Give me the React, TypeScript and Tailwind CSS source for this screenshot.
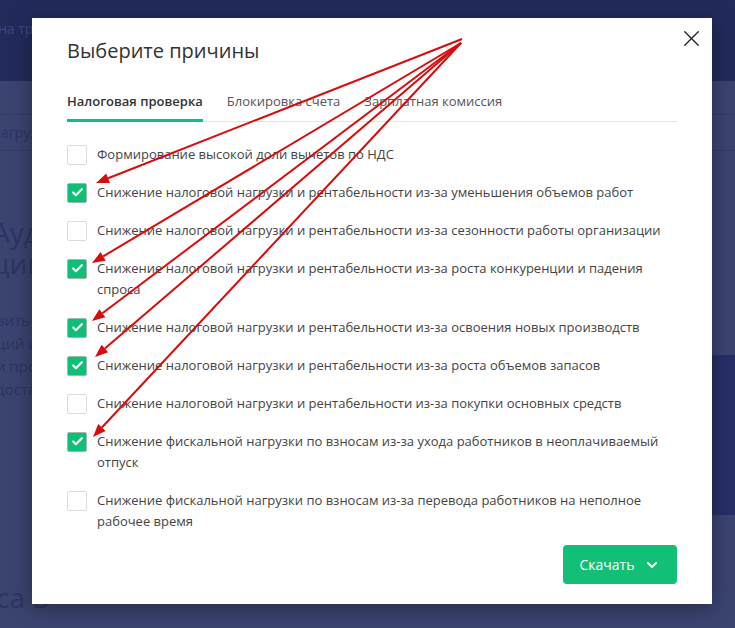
import { X, ChevronDown, Check } from "lucide-react";

const reasons = [
  { text: "Формирование высокой доли вычетов по НДС", checked: false },
  { text: "Снижение налоговой нагрузки и рентабельности из-за уменьшения объемов работ", checked: true },
  { text: "Снижение налоговой нагрузки и рентабельности из-за сезонности работы организации", checked: false },
  { text: "Снижение налоговой нагрузки и рентабельности из-за роста конкуренции и падения спроса", checked: true },
  { text: "Снижение налоговой нагрузки и рентабельности из-за освоения новых производств", checked: true },
  { text: "Снижение налоговой нагрузки и рентабельности из-за роста объемов запасов", checked: true },
  { text: "Снижение налоговой нагрузки и рентабельности из-за покупки основных средств", checked: false },
  { text: "Снижение фискальной нагрузки по взносам из-за ухода работников в неоплачиваемый отпуск", checked: true },
  { text: "Снижение фискальной нагрузки по взносам из-за перевода работников на неполное рабочее время", checked: false },
];

const arrows = [
  { from: [462, 39], to: [96, 183] },
  { from: [461, 43], to: [92, 263] },
  { from: [461, 43], to: [92, 321] },
  { from: [461, 43], to: [95, 357] },
  { from: [461, 43], to: [93, 437] },
];

function Arrows() {
  return (
    <svg className="absolute inset-0 pointer-events-none" width={735} height={628}>
      {arrows.map((a, i) => {
        const [x1, y1] = a.from;
        const [x2, y2] = a.to;
        const len = Math.hypot(x2 - x1, y2 - y1);
        const ux = (x2 - x1) / len;
        const uy = (y2 - y1) / len;
        const bx = x2 - ux * 13;
        const by = y2 - uy * 13;
        const px = -uy * 5;
        const py = ux * 5;
        return (
          <g key={i}>
            <line x1={x1} y1={y1} x2={bx} y2={by} stroke="#d80c0c" strokeWidth={2} />
            <polygon
              points={`${x2},${y2} ${bx + px},${by + py} ${bx - px},${by - py}`}
              fill="#d80c0c"
            />
          </g>
        );
      })}
    </svg>
  );
}

function Checkbox({ checked }: { checked: boolean }) {
  return checked ? (
    <span className="flex h-5 w-5 shrink-0 items-center justify-center rounded-[2px] border border-[#9fb8ad] bg-[#10bf77]">
      <Check size={13} strokeWidth={4} className="text-white" />
    </span>
  ) : (
    <span className="h-5 w-5 shrink-0 rounded-[2px] border border-[#dcdcdc] bg-white" />
  );
}

export default function App() {
  return (
    <div className="relative h-[628px] w-[735px] overflow-hidden bg-[#3b4370] font-['Open_Sans',sans-serif]">
      {/* dimmed page behind */}
      <div className="flex h-[81px] flex-col bg-[#222a5b] pt-[18px] text-[14px] text-[#3c4784]">
        <span className="-ml-[2px]">на тр</span>
      </div>
      <div className="flex flex-col text-[#2c3462]">
        <div className="h-[34px] border-b border-[#343c68]" />
        <div className="-ml-[8px] flex h-[36px] items-center border-b border-[#343c68] text-[14px]">нагруз</div>
        <div className="-ml-[8px] mt-[66px] flex flex-col text-[28px] leading-[31px]">
          <span>Ауди</span>
          <span>ции</span>
        </div>
        <div className="-ml-[4px] mt-[30px] flex flex-col text-[15px] leading-[23px]">
          <span>вить</span>
          <span>ций и</span>
          <span>и про</span>
          <span>доста</span>
        </div>
        <div className="-ml-[4px] mt-[175px] text-[28px]">са в</div>
      </div>
      <div className="absolute right-0 top-[355px] h-[160px] w-[24px] bg-[#262f66]" />

      {/* modal */}
      <div className="absolute left-[32px] top-[18px] flex h-[586px] w-[680px] flex-col bg-white px-[35px] pt-[19px] shadow-[0_4px_20px_rgba(0,0,0,0.35)]">
        <button className="absolute right-[7px] top-[7px] text-[#222]">
          <X size={27} strokeWidth={1.2} />
        </button>
        <h2 className="text-[20px] leading-[28px] text-[#333]">Выберите причины</h2>

        <div className="mt-[27px] flex gap-[24px] border-b border-[#e3e1ef] text-[13px]">
          <div className="-mb-[1px] border-b-[3px] border-[#12bf7a] pb-[7px] font-semibold text-[#333]">
            Налоговая проверка
          </div>
          <div className="text-[#555]">Блокировка счета</div>
          <div className="text-[#555]">Зарплатная комиссия</div>
        </div>

        <div className="mt-[23px] flex flex-col gap-[18px]">
          {reasons.map((r, i) => (
            <label key={i} className="flex items-start gap-[10px]">
              <Checkbox checked={r.checked} />
              <span className="text-[13px] leading-[21px] -my-[0.5px] text-[#444]">{r.text}</span>
            </label>
          ))}
        </div>

        <div className="mb-[20px] mt-auto flex justify-end">
          <button className="flex h-[39px] w-[114px] items-center justify-center gap-[10px] rounded-[4px] bg-[#12bf77] text-[14px] text-white">
            Скачать
            <ChevronDown size={16} strokeWidth={3} />
          </button>
        </div>
      </div>

      <Arrows />
    </div>
  );
}
